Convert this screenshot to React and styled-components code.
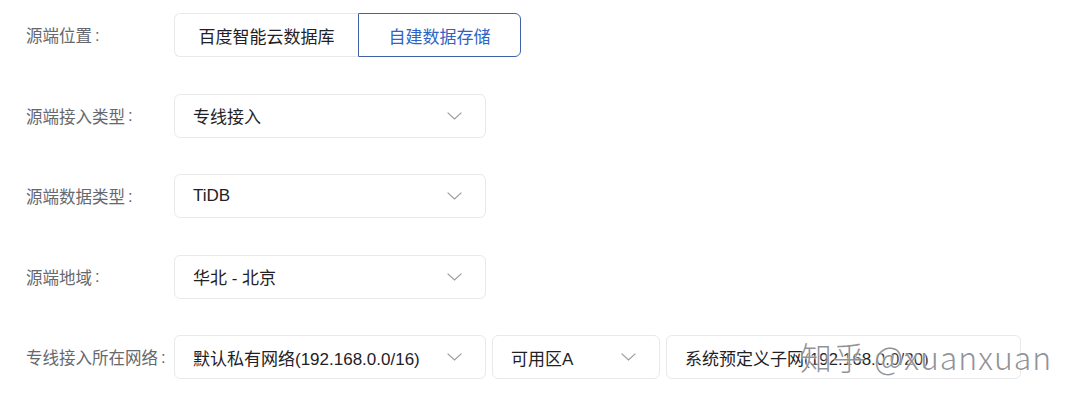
import React from "react";
import styled, { createGlobalStyle } from "styled-components";

const GlobalStyle = createGlobalStyle`
  html, body {
    margin: 0;
    padding: 0;
    background: #ffffff;
  }
  body {
    font-family: "Liberation Sans", "Noto Sans CJK SC", sans-serif;
  }
`;

const Page = styled.div`
  position: relative;
  width: 1080px;
  height: 401px;
  overflow: hidden;
  box-sizing: border-box;
  padding: 13px 0 0 26px;
  display: flex;
  flex-direction: column;
  gap: 36.5px;
`;

const Row = styled.div`
  display: flex;
  align-items: center;
  height: 44px;
`;

const Label = styled.div`
  width: 148px;
  flex-shrink: 0;
  font-size: 16.5px;
  color: #66686d;
  white-space: nowrap;
  display: flex;
  align-items: center;
`;

const Colon = styled.span`
  margin-left: 3px;
`;

const Controls = styled.div`
  display: flex;
  gap: ${(p) => p.$gap || 0}px;
  height: 100%;
`;

const Segment = styled.div`
  box-sizing: border-box;
  width: ${(p) => p.$width}px;
  height: 100%;
  display: flex;
  align-items: center;
  justify-content: center;
  font-size: 17px;
  color: ${(p) => (p.$active ? "#2f64c4" : "#1f2125")};
  border: 1px solid ${(p) => (p.$active ? "#3f63a6" : "#e9e9ec")};
  border-radius: ${(p) => (p.$first ? "6px 0 0 6px" : "0 6px 6px 0")};
  ${(p) => p.$first && "border-right: none;"}
  ${(p) => p.$active && "border-width: 1.5px;"}
`;

const Select = styled.div`
  box-sizing: border-box;
  width: ${(p) => p.$width}px;
  height: 100%;
  display: flex;
  align-items: center;
  justify-content: space-between;
  padding: 0 23px 0 ${(p) => p.$pad || 18}px;
  border: 1px solid #e9e9ec;
  border-radius: 6px;
  font-size: 17px;
  color: #1f2125;
  white-space: nowrap;
  overflow: hidden;
`;

const Chevron = () => (
  <svg width="15" height="8" viewBox="0 0 15 8" fill="none">
    <path d="M0.6 0.6 L7.5 7 L14.4 0.6" stroke="#9a9ca2" strokeWidth="1.2" />
  </svg>
);

const Watermark = styled.div`
  position: absolute;
  left: 800px;
  top: 336px;
  font-family: "Noto Sans CJK SC", "Liberation Sans", sans-serif;
  font-weight: 300;
  font-size: 32px;
  line-height: 40px;
  color: rgba(110, 112, 118, 0.75);
  text-shadow: 0 0 3px #ffffff, 0 0 2px #ffffff;
  white-space: nowrap;
  letter-spacing: 1px;
`;

export default function App() {
  return (
    <>
      <GlobalStyle />
      <Page>
        <Row>
          <Label>
            源端位置<Colon>:</Colon>
          </Label>
          <Controls>
            <Segment $first $width={184}>
              百度智能云数据库
            </Segment>
            <Segment $active $width={163}>
              自建数据存储
            </Segment>
          </Controls>
        </Row>
        <Row>
          <Label>
            源端接入类型<Colon>:</Colon>
          </Label>
          <Select $width={312}>
            <span>专线接入</span>
            <Chevron />
          </Select>
        </Row>
        <Row>
          <Label>
            源端数据类型<Colon>:</Colon>
          </Label>
          <Select $width={312}>
            <span>TiDB</span>
            <Chevron />
          </Select>
        </Row>
        <Row>
          <Label>
            源端地域<Colon>:</Colon>
          </Label>
          <Select $width={312}>
            <span>华北 - 北京</span>
            <Chevron />
          </Select>
        </Row>
        <Row>
          <Label>
            专线接入所在网络<Colon>:</Colon>
          </Label>
          <Controls $gap={6}>
            <Select $width={312}>
              <span>默认私有网络(192.168.0.0/16)</span>
              <Chevron />
            </Select>
            <Select $width={168}>
              <span>可用区A</span>
              <Chevron />
            </Select>
            <Select $width={355}>
              <span>系统预定义子网(192.168.0.0/20)</span>
            </Select>
          </Controls>
        </Row>
        <Watermark>知乎 @xuanxuan</Watermark>
      </Page>
    </>
  );
}
